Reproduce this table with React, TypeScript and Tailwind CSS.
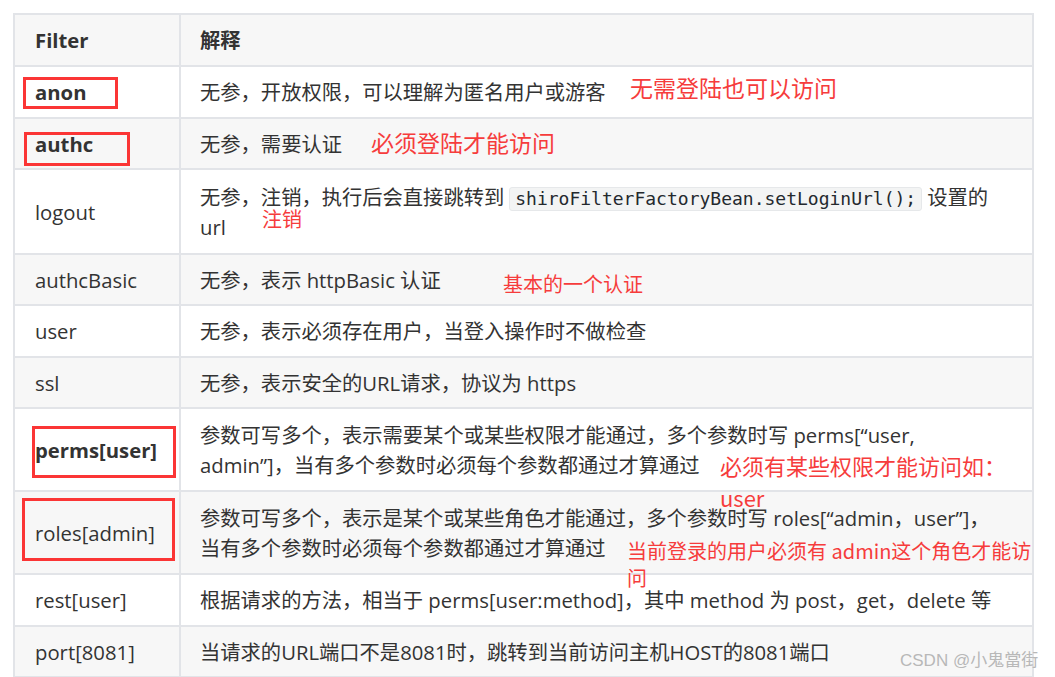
import type { ReactNode } from "react";

// Shiro 内置过滤器对照表（带红色批注）
type RowProps = {
  name: string;
  bold?: boolean;
  gray?: boolean;
  height: string;
  children: ReactNode;
  overlay?: ReactNode;
};

function Row({ name, bold, gray, height, children, overlay }: RowProps) {
  return (
    <div
      className={`relative flex border-t-2 border-[#e2e4e8] ${height} ${gray ? "bg-[#f7f7f7]" : "bg-white"}`}
    >
      <div
        className={`flex w-[166px] shrink-0 items-center border-r-2 border-[#e2e4e8] pl-[20px] ${bold ? "font-bold" : ""}`}
      >
        {name}
      </div>
      <div className="flex flex-1 items-center pl-[19px] pr-[16px]">
        <div>{children}</div>
      </div>
      {overlay}
    </div>
  );
}

function RedBox({ className }: { className: string }) {
  return <div className={`pointer-events-none absolute border-[3px] border-[#fb3535] ${className}`} />;
}

function Note({ className, children }: { className: string; children: ReactNode }) {
  return (
    <div
      className={`pointer-events-none absolute whitespace-nowrap font-['Noto_Sans_CJK_SC',sans-serif] text-[#f63c3c] ${className}`}
    >
      {children}
    </div>
  );
}

export default function App() {
  return (
    <div className="min-h-[677px] bg-white pl-[13px] pt-[13px] font-['Open_Sans','Noto_Sans_CJK_SC',sans-serif] text-[20.3px] leading-[30px] text-[#333]">
      <div className="relative w-[1021px] border-2 border-b-0 border-[#e2e4e8]">
        {/* 表头 */}
        <div className="flex h-[50px] bg-[#f7f7f7] font-bold">
          <div className="flex w-[166px] shrink-0 items-center border-r-2 border-[#e2e4e8] pl-[20px]">
            Filter
          </div>
          <div className="flex flex-1 items-center pl-[19px]">解释</div>
        </div>

        <Row
          name="anon"
          bold
          height="h-[52px]"
          overlay={
            <>
              <RedBox className="left-[8px] top-[10px] h-[32px] w-[95px]" />
              <Note className="left-[615px] top-[5px] text-[23px] leading-[30px]">无需登陆也可以访问</Note>
            </>
          }
        >
          无参，开放权限，可以理解为匿名用户或游客
        </Row>

        <Row
          name="authc"
          bold
          gray
          height="h-[51px]"
          overlay={
            <>
              <RedBox className="left-[9px] top-[13px] h-[34px] w-[106px]" />
              <Note className="left-[356px] top-[8px] text-[23px] leading-[30px]">必须登陆才能访问</Note>
            </>
          }
        >
          无参，需要认证
        </Row>

        <Row
          name="logout"
          height="h-[85px]"
          overlay={<Note className="left-[247px] top-[34px] text-[20px] leading-[30px]">注销</Note>}
        >
          无参，注销，执行后会直接跳转到
          <code className="mx-[5px] inline-block rounded-[3px] border border-[#e6e8ea] bg-[#f3f4f4] px-[5px] font-['DejaVu_Sans_Mono',monospace] text-[18px] leading-[22px] text-[#24292e]">
            shiroFilterFactoryBean.setLoginUrl();
          </code>
          设置的
          <br />
          url
        </Row>

        <Row
          name="authcBasic"
          gray
          height="h-[51px]"
          overlay={<Note className="left-[488px] top-[14px] text-[20px] leading-[30px]">基本的一个认证</Note>}
        >
          无参，表示 httpBasic 认证
        </Row>

        <Row name="user" height="h-[52px]">
          无参，表示必须存在用户，当登入操作时不做检查
        </Row>

        <Row name="ssl" gray height="h-[51px]">
          无参，表示安全的URL请求，协议为 https
        </Row>

        <Row
          name="perms[user]"
          bold
          height="h-[83px]"
          overlay={
            <>
              <RedBox className="left-[17px] top-[17px] h-[52px] w-[144px]" />
              <Note className="left-[705px] top-[40px] z-10 text-[22px] leading-[32px]">
                必须有某些权限才能访问如：
                <br />
                user
              </Note>
            </>
          }
        >
          参数可写多个，表示需要某个或某些权限才能通过，多个参数时写 perms[“user,
          <br />
          admin”]，当有多个参数时必须每个参数都通过才算通过
        </Row>

        <Row
          name="roles[admin]"
          gray
          height="h-[83px]"
          overlay={
            <>
              <RedBox className="left-[7px] top-[6px] h-[63px] w-[153px]" />
              <Note className="left-[612px] top-[45px] z-10 text-[20px] leading-[27px]">
                当前登录的用户必须有 admin这个角色才能访
                <br />问
              </Note>
            </>
          }
        >
          参数可写多个，表示是某个或某些角色才能通过，多个参数时写 roles[“admin，user”]，
          <br />
          当有多个参数时必须每个参数都通过才算通过
        </Row>

        <Row name="rest[user]" height="h-[52px]">
          根据请求的方法，相当于 perms[user:method]，其中 method 为 post，get，delete 等
        </Row>

        <Row
          name="port[8081]"
          gray
          height="h-[51px]"
          overlay={
            <div className="pointer-events-none absolute left-[885px] top-[24px] whitespace-nowrap font-['Liberation_Sans','Noto_Sans_CJK_SC',sans-serif] text-[17px] leading-[20px] text-[#b8b8b8]">
              CSDN @小鬼當街
            </div>
          }
        >
          当请求的URL端口不是8081时，跳转到当前访问主机HOST的8081端口
        </Row>
        <div className="h-[2px] bg-[#e2e4e8]" />
      </div>
    </div>
  );
}
